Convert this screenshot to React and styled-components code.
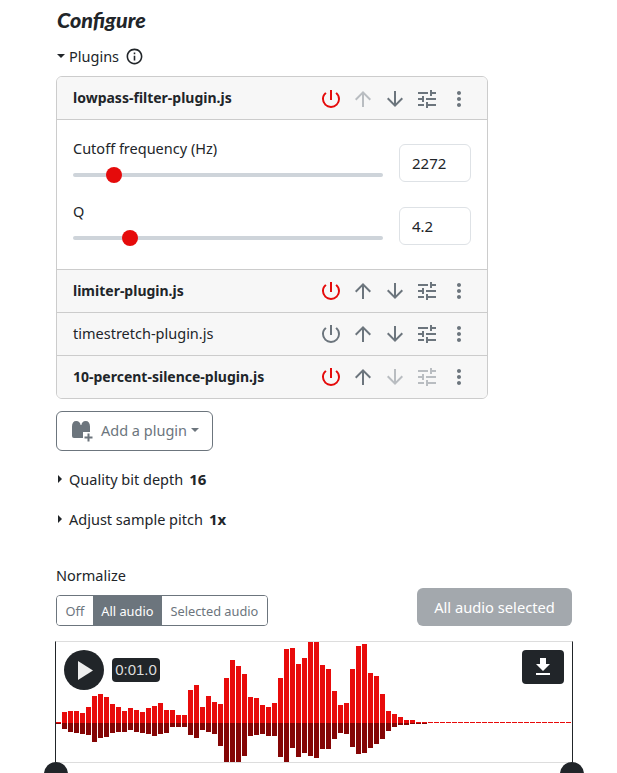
import styled, { createGlobalStyle } from "styled-components";
import {
  MdPowerSettingsNew,
  MdArrowUpward,
  MdArrowDownward,
  MdTune,
  MdMoreVert,
  MdInfoOutline,
  MdFileDownload,
} from "react-icons/md";

const GlobalStyle = createGlobalStyle`
  html, body {
    margin: 0;
    height: 100%;
    overflow: hidden;
    background: #fff;
    color: #212529;
    font-family: "Noto Sans", "Liberation Sans", sans-serif;
    font-size: 14.5px;
  }
`;

const Page = styled.div`
  width: 516px;
  margin-left: 56px;
  display: flex;
  flex-direction: column;
`;

const Title = styled.h2`
  margin: 5px 0 2px 1px;
  height: 30px;
  font-family: "Lato", sans-serif;
  font-style: italic;
  font-weight: 900;
  font-size: 21.5px;
  line-height: 30px;
  color: #212529;
`;

const Disclosure = styled.div`
  display: flex;
  align-items: center;
  height: 20px;
  margin-top: ${(p) => p.$top}px;
  line-height: 20px;
  white-space: nowrap;

  b {
    margin-left: 6px;
    font-size: 15px;
    font-weight: 700;
  }
  svg.info {
    margin-left: 6px;
  }
`;

const Caret = styled.span`
  width: 0;
  height: 0;
  margin-left: ${(p) => (p.$open ? 1 : 2)}px;
  margin-right: ${(p) => (p.$open ? 4 : 7)}px;
  border-style: solid;
  ${(p) =>
    p.$open
      ? "border-width: 4.5px 4px 0; border-color: #212529 transparent transparent;"
      : "border-width: 4px 0 4px 4px; border-color: transparent transparent transparent #212529;"}
`;

const Panel = styled.div`
  width: 430px;
  margin-top: 10px;
  border: 1px solid #ccc;
  border-radius: 6px;
  overflow: hidden;
`;

const PluginRow = styled.div`
  display: flex;
  align-items: center;
  justify-content: space-between;
  height: 42px;
  padding: 0 16px;
  background: #f7f7f7;
  border-top: ${(p) => (p.$first ? "none" : "1px solid #ccc")};
  border-bottom: ${(p) => (p.$first ? "1px solid #ccc" : "none")};
`;

const PluginName = styled.span`
  margin-top: -2px;
  font-size: ${(p) => (p.$bold ? 14 : 14.5)}px;
  font-weight: ${(p) => (p.$bold ? 700 : 400)};
`;

const Actions = styled.div`
  display: flex;
  gap: 8px;
  margin-top: ${(p) => (p.$first ? 2 : 0)}px;

  svg {
    display: block;
    width: 24px;
    height: 24px;
  }
`;

const Action = styled.span`
  display: block;
  color: ${(p) => (p.$on ? "#e50b0b" : p.$disabled ? "#b9bdc1" : "#6c757d")};
`;

const Settings = styled.div`
  display: flex;
  flex-direction: column;
  gap: 25px;
  padding: 24px 16px;
`;

const SliderRow = styled.div`
  display: flex;
  align-items: flex-start;
  gap: 16px;
  height: 38px;
`;

const SliderField = styled.label`
  flex: 1;
  display: flex;
  flex-direction: column;
  gap: 9px;
  margin-top: -6px;
  line-height: 20px;
`;

const Range = styled.input.attrs({ type: "range", min: 0, max: 1000 })`
  appearance: none;
  display: block;
  width: 100%;
  height: 16px;
  margin: 0;
  background: transparent;

  &::-webkit-slider-runnable-track {
    height: 4px;
    border-radius: 2px;
    background: #ced4da;
  }
  &::-webkit-slider-thumb {
    appearance: none;
    width: 16px;
    height: 16px;
    margin-top: -6px;
    border-radius: 50%;
    background: #e50b0b;
  }
`;

const NumberBox = styled.input.attrs({ type: "text", readOnly: true })`
  box-sizing: border-box;
  width: 72px;
  height: 38px;
  padding: 0 12px;
  border: 1px solid #dee2e6;
  border-radius: 6px;
  font: inherit;
  font-size: 15px;
  color: #212529;
`;

const AddButton = styled.button`
  display: flex;
  align-items: center;
  box-sizing: border-box;
  width: 157px;
  height: 40px;
  margin-top: 12px;
  padding: 0 0 2px 15px;
  border: 1px solid #6c757d;
  border-radius: 6px;
  background: #fff;
  color: #6c757d;
  font: inherit;

  svg {
    margin: 2px 8px 0 0;
  }
  i {
    width: 0;
    height: 0;
    margin-left: 4px;
    border-style: solid;
    border-width: 4.5px 4px 0;
    border-color: #6c757d transparent transparent;
  }
`;

const NormalizeBar = styled.div`
  display: flex;
  justify-content: space-between;
  align-items: flex-end;
  margin-top: 3px;
`;

const ToggleGroup = styled.div`
  display: flex;
  height: 31px;
  box-sizing: border-box;
  border: 1px solid #6c757d;
  border-radius: 4px;
  overflow: hidden;
  font-size: 12.8px;
`;

const Toggle = styled.span`
  display: flex;
  align-items: center;
  padding: 0 8.5px;
  color: ${(p) => (p.$active ? "#fff" : "#6c757d")};
  background: ${(p) => (p.$active ? "#6c757d" : "#fff")};
`;

const SubmitButton = styled.button`
  width: 155px;
  height: 38px;
  padding: 0;
  border: none;
  border-radius: 6px;
  background: #a3a8ad;
  color: #fff;
  font: inherit;
  font-size: 14.7px;
`;

const Wave = styled.div`
  position: relative;
  box-sizing: border-box;
  width: 518px;
  height: 122px;
  margin: 15px 0 0 -1px;
  border-left: 1px solid #212529;
  border-right: 1px solid #212529;
  border-top: 1px solid #ddd;
  border-bottom: 1px solid #ddd;

  svg.bars {
    display: block;
  }
`;

const PlayButton = styled.button`
  position: absolute;
  left: 8px;
  top: 8px;
  display: flex;
  align-items: center;
  justify-content: center;
  width: 40px;
  height: 40px;
  padding: 0 0 0 3px;
  border: none;
  border-radius: 50%;
  background: #212529;
`;

const TimeBadge = styled.span`
  position: absolute;
  left: 56px;
  top: 16px;
  width: 48px;
  height: 24px;
  border-radius: 4px;
  background: #212529;
  color: #ddd;
  font-family: "Liberation Sans", sans-serif;
  font-size: 15px;
  line-height: 24px;
  text-align: center;
`;

const DownloadButton = styled.button`
  position: absolute;
  right: 8px;
  top: 8px;
  display: flex;
  align-items: center;
  justify-content: center;
  width: 42px;
  height: 34px;
  padding: 0;
  border: none;
  border-radius: 4px;
  background: #212529;
  color: #fff;
`;

const Handle = styled.span`
  position: absolute;
  top: 120px;
  ${(p) => (p.$right ? "right: -12px;" : "left: -12px;")}
  width: 24px;
  height: 24px;
  border-radius: 50%;
  background: #212529;
`;

const UP = [
  11, 12, 12, 10, 16, 27, 29, 26, 19, 16, 12, 15, 13, 11, 15, 17, 20, 13, 13, 8, 8, 33, 38, 16, 27, 21, 19, 45, 63, 57,
  49, 26, 25, 18, 16, 20, 45, 74, 75, 59, 65, 81, 81, 58, 54, 32, 18, 20, 54, 77, 79, 50, 47, 29, 12, 9, 6, 3, 3, 1, 1, 1,
];
const DOWN = [
  6, 9, 10, 11, 12, 19, 15, 14, 10, 9, 9, 7, 9, 10, 11, 13, 11, 10, 4, 4, 4, 12, 15, 7, 9, 11, 23, 39, 39, 39,
  33, 13, 12, 11, 13, 13, 34, 39, 25, 34, 30, 33, 35, 26, 26, 16, 10, 11, 24, 31, 30, 25, 21, 16, 8, 4, 2, 2, 1, 1, 1, 0,
];

function Waveform() {
  const mid = 81;
  return (
    <svg className="bars" width="516" height="120" viewBox="0 0 516 120">
      <rect x="0" y={mid - 1} width="5" height="1" fill="#e80b0b" />
      <rect x="0" y={mid} width="5" height="1" fill="#840505" />
      {UP.map((h, i) => (
        <rect key={i} x={6 + i * 6} y={mid - h} width="5" height={h} fill="#e80b0b" />
      ))}
      {DOWN.map((h, i) => (
        <rect key={i} x={6 + i * 6} y={mid} width="5" height={h} fill="#840505" />
      ))}
      <line x1="378" x2="516" y1={mid - 0.5} y2={mid - 0.5} stroke="#e80b0b" strokeWidth="1" strokeDasharray="5 1" />
    </svg>
  );
}

function BrickIcon() {
  return (
    <svg width="21" height="21" viewBox="0 0 21 21">
      <path
        d="M0 5.5C0 2 1.5 0 4.2 0S8.4 2 8.6 4h.8C9.6 2 11 0 13.7 0S18 2 18 5.5V17H2a2 2 0 0 1-2-2z"
        fill="#6c757d"
      />
      <rect x="11" y="11" width="10" height="10" fill="#fff" />
      <path d="M15.5 12.5h2v3h3v2h-3v3h-2v-3h-3v-2h3z" fill="#6c757d" />
    </svg>
  );
}

const PLUGINS = [
  { name: "limiter-plugin.js", bold: true, on: true },
  { name: "timestretch-plugin.js", bold: false, on: false },
  { name: "10-percent-silence-plugin.js", bold: true, on: true, last: true },
];

function PluginActions({ on, first, last }) {
  return (
    <Actions $first={first}>
      <Action $on={on}><MdPowerSettingsNew /></Action>
      <Action $disabled={first}><MdArrowUpward /></Action>
      <Action $disabled={last}><MdArrowDownward /></Action>
      <Action $disabled={last}><MdTune /></Action>
      <Action><MdMoreVert /></Action>
    </Actions>
  );
}

export default function App() {
  return (
    <Page>
      <GlobalStyle />
      <Title>Configure</Title>
      <Disclosure $top={9}>
        <Caret $open />
        Plugins
        <MdInfoOutline className="info" size={19} />
      </Disclosure>

      <Panel>
        <PluginRow $first>
          <PluginName $bold>lowpass-filter-plugin.js</PluginName>
          <PluginActions on first />
        </PluginRow>
        <Settings>
          <SliderRow>
            <SliderField>
              Cutoff frequency (Hz)
              <Range defaultValue={112} />
            </SliderField>
            <NumberBox defaultValue="2272" />
          </SliderRow>
          <SliderRow>
            <SliderField>
              Q
              <Range defaultValue={165} />
            </SliderField>
            <NumberBox defaultValue="4.2" />
          </SliderRow>
        </Settings>
        {PLUGINS.map((p) => (
          <PluginRow key={p.name}>
            <PluginName $bold={p.bold}>{p.name}</PluginName>
            <PluginActions on={p.on} last={p.last} />
          </PluginRow>
        ))}
      </Panel>

      <AddButton>
        <BrickIcon />
        Add a plugin
        <i />
      </AddButton>

      <Disclosure $top={18}>
        <Caret />
        Quality bit depth
        <b>16</b>
      </Disclosure>
      <Disclosure $top={20}>
        <Caret />
        Adjust sample pitch
        <b>1x</b>
      </Disclosure>

      <Disclosure $top={36}>Normalize</Disclosure>
      <NormalizeBar>
        <ToggleGroup>
          <Toggle>Off</Toggle>
          <Toggle $active>All audio</Toggle>
          <Toggle>Selected audio</Toggle>
        </ToggleGroup>
        <SubmitButton disabled>All audio selected</SubmitButton>
      </NormalizeBar>

      <Wave>
        <Waveform />
        <PlayButton>
          <svg width="15" height="19" viewBox="0 0 15 19">
            <path d="M0 0l15 9.5L0 19z" fill="#eee" />
          </svg>
        </PlayButton>
        <TimeBadge>0:01.0</TimeBadge>
        <DownloadButton>
          <MdFileDownload size={24} />
        </DownloadButton>
        <Handle />
        <Handle $right />
      </Wave>
    </Page>
  );
}
